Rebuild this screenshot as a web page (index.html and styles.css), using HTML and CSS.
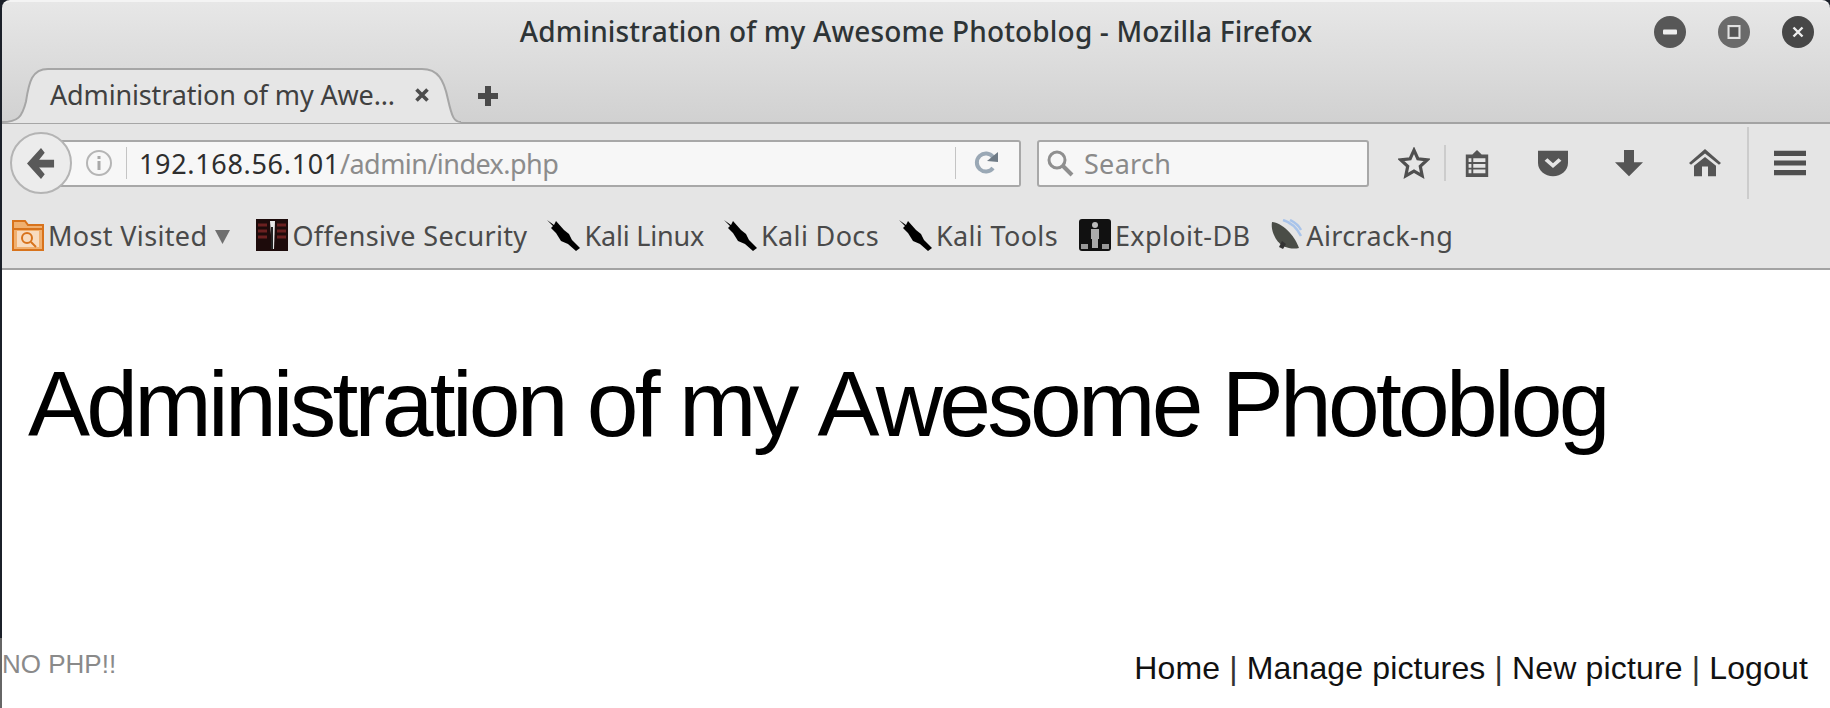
FILE: index.html
```html
<!DOCTYPE html>
<html lang="en">
<head>
    <meta charset="UTF-8">
    <title>Administration of my Awesome Photoblog - Mozilla Firefox</title>
    <link rel="stylesheet" href="styles.css">
</head>
<body>
<div class="window">

    <header class="chrome-top">
        <div class="titlebar">
            <span></span>
            <div class="window-title">Administration of my Awesome Photoblog - Mozilla Firefox</div>
            <div class="window-buttons">
                <span class="win-btn"><svg width="16" height="16" viewBox="0 0 16 16"><rect x="1" y="5.5" width="14" height="5" rx="1" fill="#eee"/></svg></span>
                <span class="win-btn win-btn-light"><svg width="16" height="16" viewBox="0 0 16 16"><rect x="2.5" y="2" width="11" height="12" fill="none" stroke="#e2e2e2" stroke-width="2"/><rect x="4" y="4" width="8" height="8" fill="#555"/></svg></span>
                <span class="win-btn win-btn-dark"><svg width="16" height="16" viewBox="0 0 16 16"><path d="M3.5 3.5l9 9M12.5 3.5l-9 9" stroke="#eee" stroke-width="2.4"/></svg></span>
            </div>
        </div>
        <div class="tabstrip">
            <div class="tab">
                <svg class="tab-shape" viewBox="0 0 459 57" preserveAspectRatio="none"><path d="M0 55C16 55 20 50 24 34C27 14 30 1 46 1H420C436 1 442 12 446 32C450 50 452 55 459 55V57H0Z" fill="#e6e6e6" stroke="#a6a6a6" stroke-width="2"/></svg>
                <span class="tab-label">Administration of my Awe...</span>
                <svg class="tab-close" width="16" height="16" viewBox="0 0 16 16"><path d="M2.5 2.5l11 11M13.5 2.5l-11 11" stroke="#4d4d4d" stroke-width="3.6"/></svg>
            </div>
            <svg class="tab-new" width="20" height="20" viewBox="0 0 20 20"><path d="M7 0h6v7h7v6h-7v7H7v-7H0V7h7z" fill="#4a4a4a"/></svg>
        </div>
    </header>

    <nav class="navbar">
        <button class="back-btn">
            <svg width="28" height="31" viewBox="0 0 30 32" preserveAspectRatio="none"><path d="M0 16L15 0l4 5-6 7h16v8H13l6 7-4 5z" fill="#595959"/></svg>
        </button>
        <div class="urlbar">
            <svg class="info-icon" width="28" height="28" viewBox="0 0 28 28"><circle cx="14" cy="14" r="12" fill="none" stroke="#b5b5b5" stroke-width="2"/><rect x="12.5" y="12" width="3" height="9" fill="#a8a8a8"/><rect x="12.5" y="7" width="3" height="3" fill="#a8a8a8"/></svg>
            <span class="bar-sep"></span>
            <span class="url"><span class="url-host">192.168.56.101</span><span class="url-path">/admin/index.php</span></span>
            <span class="bar-sep bar-sep-right"></span>
            <svg class="reload-icon" width="26" height="26" viewBox="0 0 26 26"><path d="M20 18a9 9 0 1 1 0-11" fill="none" stroke="#9aa8b5" stroke-width="4"/><path d="M14 11L25 2v10z" fill="#6f7b86"/></svg>
        </div>
        <div class="searchbar">
            <svg width="30" height="30" viewBox="0 0 30 30"><circle cx="12" cy="12" r="8" fill="none" stroke="#8f8f8f" stroke-width="3"/><path d="M18 18l9 9" stroke="#8f8f8f" stroke-width="4"/></svg>
            <span class="search-text">Search</span>
        </div>
        <div class="tools">
            <svg class="tool" width="32" height="32" viewBox="0 0 30 30" preserveAspectRatio="none"><path d="M15 3l3.6 8 8.9 1-6.6 6 1.8 9L15 22.500 7.300 27l1.800-9-6.600-6 8.900-1z" fill="none" stroke="#4f4f4f" stroke-width="3"/></svg>
            <span class="tool-sep"></span>
            <svg class="tool" width="28" height="30" viewBox="0 0 30 32" preserveAspectRatio="none"><path d="M3 7h7l5-5 5 5h7v24H3z" fill="#555"/><path d="M6 11h18v4H6zM6 17h18v4H6zM6 23h18v4H6z" fill="#e5e5e5"/><path d="M10 10v18" stroke="#555" stroke-width="2"/></svg>
            <svg class="tool tool-far" width="32" height="28" viewBox="0 0 32 32" preserveAspectRatio="none"><path d="M1 2h30v14c0 9-7 15-15 15S1 25 1 16z" fill="#555"/><path d="M9 12l7 7 7-7" fill="none" stroke="#e5e5e5" stroke-width="4"/></svg>
            <svg class="tool tool-far" width="28" height="28" viewBox="0 0 28 32" preserveAspectRatio="none"><path d="M9 1h10v14h9L14 31 0 15h9z" fill="#555"/></svg>
            <svg class="tool tool-far" width="32" height="28" viewBox="0 0 32 32" preserveAspectRatio="none"><path d="M16 0L0 16l2 2L16 5l14 13 2-2z" fill="#555"/><path d="M16 9L5 19v12h8V20h6v11h8V19z" fill="#555"/></svg>
            <span class="tool-sep tool-sep-tall"></span>
            <svg class="tool" width="32" height="26" viewBox="0 0 32 30" preserveAspectRatio="none"><path d="M0 1h32v6H0zM0 12h32v6H0zM0 23h32v6H0z" fill="#4f4f4f"/></svg>
        </div>
    </nav>

    <div class="bookmarks">
        <span class="bookmark">
            <svg width="32" height="32" viewBox="0 0 32 32"><path d="M1 2h12l3 4h15v25H1z" fill="#f0b070" stroke="#d8731c" stroke-width="2"/><path d="M2 10h28" stroke="#d8731c" stroke-width="2"/><rect x="5" y="12" width="22" height="16" fill="#f8dcc0"/><circle cx="15" cy="19" r="5" fill="none" stroke="#d8731c" stroke-width="2"/><path d="M19 23l5 5" stroke="#d8731c" stroke-width="2"/></svg>
            <span>Most Visited</span>
            <svg class="bm-arrow" width="15" height="14" viewBox="0 0 15 14"><path d="M0 0h15L7.500 14z" fill="#6f6f6f"/></svg>
        </span>
        <span class="bookmark">
            <svg width="32" height="32" viewBox="0 0 32 32"><rect width="32" height="32" fill="#1d0b0b"/><path d="M2 6h9M2 12h9M2 18h9M21 6h9M21 12h9M21 18h9" stroke="#6a2020" stroke-width="3"/><path d="M14 2h5l-1 28h-2z" fill="#e8e8e8"/><path d="M15 8h2v22h-2z" fill="#222"/></svg>
            <span>Offensive Security</span>
        </span>
        <span class="bookmark">
            <svg class="dragon" width="33" height="32" viewBox="0 0 33 32"><path d="M0 1l7 5 2-4 8 9 5 4 3 6 8 8-4 3-8-7-7-3-5-8-5-5 2-2z" fill="#000"/></svg>
            <span class="bm-tight">Kali Linux</span>
        </span>
        <span class="bookmark">
            <svg class="dragon" width="33" height="32" viewBox="0 0 33 32"><path d="M0 1l7 5 2-4 8 9 5 4 3 6 8 8-4 3-8-7-7-3-5-8-5-5 2-2z" fill="#000"/></svg>
            <span>Kali Docs</span>
        </span>
        <span class="bookmark">
            <svg class="dragon" width="33" height="32" viewBox="0 0 33 32"><path d="M0 1l7 5 2-4 8 9 5 4 3 6 8 8-4 3-8-7-7-3-5-8-5-5 2-2z" fill="#000"/></svg>
            <span>Kali Tools</span>
        </span>
        <span class="bookmark bm-shift">
            <svg width="32" height="32" viewBox="0 0 32 32"><rect width="32" height="32" rx="3" fill="#111"/><circle cx="16" cy="6" r="3" fill="#bbb"/><path d="M12 10h8v10h-1v9h-6v-9h-1z" fill="#aaa"/><path d="M2 25h7v5H2zM23 25h7v5h-7z" fill="#999"/></svg>
            <span>Exploit-DB</span>
        </span>
        <span class="bookmark">
            <svg width="32" height="32" viewBox="0 0 32 32"><path d="M2 3c10 1 22 12 27 26-8 2-18-1-23-9C3 15 1 9 2 3z" fill="#4a4d47"/><path d="M9 28l3-6 4 3-3 5z" fill="#333"/><path d="M13 1c7 2 14 8 18 16M20 1c4 2 9 6 11 10" fill="none" stroke="#a9c4ea" stroke-width="2.500"/></svg>
            <span>Aircrack-ng</span>
        </span>
    </div>

    <main class="content">
        <h1 class="page-title">Administration of my Awesome Photoblog</h1>
        <footer class="page-footer">
            <span class="footer-note">NO PHP!!</span>
            <span class="footer-links"><a href="#">Home</a> | <a href="#">Manage pictures</a> | <a href="#">New picture</a> | <a href="#">Logout</a></span>
        </footer>
    </main>

</div>
</body>
</html>
```

FILE: styles.css
```css
html, body {
    margin: 0;
    padding: 0;
    height: 100%;
    overflow: hidden;
    background-color: #ffffff;
}

.window {
    display: flex;
    flex-direction: column;
    height: 708px;
    border-left: 2px solid #1b2029;
    border-image: linear-gradient(#1b2029 90%, #666666 90%) 1;
    background-color: #1b2029;
    font-family: "Noto Sans", sans-serif;
    color: #3a3a3a;
}

.chrome-top {
    height: 124px;
    border-top: 2px solid #f4f4f4;
    border-bottom: 2px solid #a3a3a3;
    border-radius: 8px 8px 0 0;
    box-sizing: border-box;
    background: linear-gradient(#e7e7e7, #d1d1d1);
}

.titlebar {
    display: grid;
    grid-template-columns: 1fr auto 1fr;
    align-items: center;
    height: 60px;
}

.window-title {
    margin-bottom: 2px;
    font-size: 28px;
    font-weight: 500;
    letter-spacing: 0.17px;
    color: #2e3436;
}

.window-buttons {
    display: flex;
    justify-content: flex-end;
    gap: 32px;
    padding-right: 16px;
}

.win-btn {
    display: flex;
    align-items: center;
    justify-content: center;
    width: 32px;
    height: 32px;
    border-radius: 50%;
    background-color: #575757;
}

.win-btn-light {
    background-color: #6a6a6a;
}

.win-btn-dark {
    background-color: #474747;
}

.tabstrip {
    display: flex;
    align-items: flex-end;
    height: 60px;
}

.tab {
    position: relative;
    display: flex;
    align-items: center;
    width: 459px;
    height: 60px;
    margin-bottom: -2px;
    box-sizing: border-box;
}

.tab-shape {
    position: absolute;
    left: 0;
    top: 4px;
    width: 100%;
    height: 56px;
}

.tab-label {
    position: relative;
    margin-left: 48px;
    font-size: 27px;
    letter-spacing: -0.15px;
    color: #404040;
    white-space: nowrap;
}

.tab-close {
    position: absolute;
    left: 412px;
    top: 23px;
}

.tab-new {
    margin: 0 0 16px 17px;
}

.navbar {
    display: flex;
    align-items: center;
    height: 78px;
    padding-left: 8px;
    background-color: #e5e5e5;
}

.back-btn {
    position: relative;
    z-index: 1;
    display: flex;
    align-items: center;
    justify-content: center;
    flex: none;
    width: 62px;
    height: 62px;
    padding: 0;
    border: 2px solid #b4b4b4;
    border-radius: 50%;
    background-color: #ececec;
}

.urlbar {
    display: flex;
    align-items: center;
    width: 971px;
    height: 47px;
    margin-left: -22px;
    padding-left: 35px;
    box-sizing: border-box;
    border: 2px solid #a8a8a8;
    border-left: none;
    border-radius: 0 3px 3px 0;
    background-color: #f7f7f7;
    font-size: 27px;
    color: #8c8c8c;
}

.info-icon {
    flex: none;
}

.bar-sep {
    width: 1px;
    height: 32px;
    margin: 0 12px 0 13px;
    background-color: #c4c4c4;
}

.bar-sep-right {
    margin: 0 17px 0 auto;
}

.url-host {
    letter-spacing: 0.67px;
    color: #2e2e2e;
}

.url-path {
    letter-spacing: -0.55px;
}

.reload-icon {
    margin-right: 20px;
}

.searchbar {
    display: flex;
    align-items: center;
    gap: 9px;
    width: 332px;
    height: 47px;
    margin-left: 16px;
    padding-left: 6px;
    box-sizing: border-box;
    border: 2px solid #a8a8a8;
    border-radius: 3px;
    background-color: #f7f7f7;
}

.search-text {
    font-size: 27px;
    letter-spacing: 0.3px;
    color: #8a8a8a;
}

.tools {
    display: flex;
    align-items: center;
    margin-left: 29px;
}

.tool {
    flex: none;
}

.tool-far {
    margin-left: 46px;
}

.tool-sep {
    width: 2px;
    height: 36px;
    margin: 0 17px 0 14px;
    background-color: #cccccc;
}

.tool-sep-tall {
    height: 72px;
    margin: 0 25px 0 26px;
}

.bookmarks {
    display: flex;
    align-items: center;
    gap: 20px;
    height: 68px;
    padding: 0 0 0 10px;
    box-sizing: border-box;
    border-bottom: 2px solid #a3a3a3;
    background-color: #e5e5e5;
    font-size: 27px;
    letter-spacing: 0.35px;
    color: #4a4a4a;
}

.bookmark {
    display: flex;
    align-items: center;
    gap: 4px;
    white-space: nowrap;
}

.bm-tight {
    letter-spacing: -0.2px;
}

.bm-shift {
    margin-left: 1px;
}

.bm-arrow {
    margin: 4px 6px 0 4px;
}

.content {
    display: flex;
    flex: 1;
    flex-direction: column;
    background-color: #ffffff;
    font-family: "Liberation Sans", Arial, sans-serif;
}

.page-title {
    margin: 79px 0 0 26px;
    font-size: 93px;
    font-weight: 400;
    font-kerning: none;
    line-height: 1.2;
    letter-spacing: -3.75px;
    color: #000000;
    white-space: nowrap;
}

.page-footer {
    display: flex;
    justify-content: space-between;
    align-items: center;
    margin-top: auto;
    padding: 0 22px 20px 0;
}

.footer-note {
    padding-bottom: 8px;
    font-size: 26px;
    color: #8a8a8a;
}

.footer-links {
    font-size: 32px;
    letter-spacing: 0.15px;
    color: #333333;
}

.footer-links a {
    color: #111111;
    text-decoration: none;
}
```
